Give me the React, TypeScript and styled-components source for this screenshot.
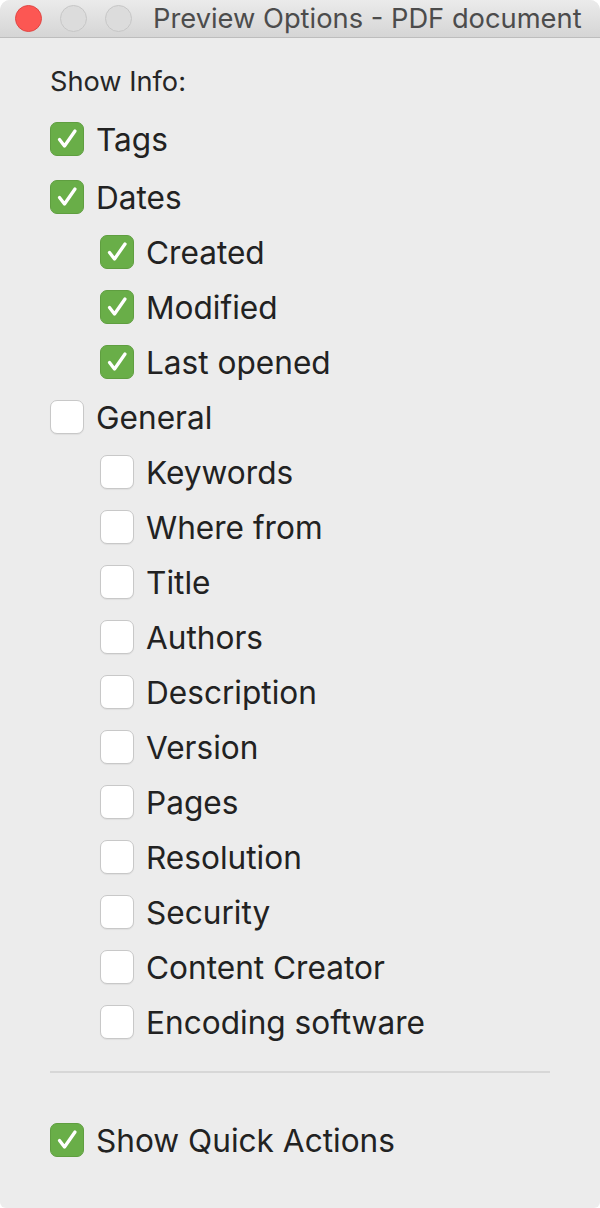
import styled, { createGlobalStyle } from "styled-components";

const Global = createGlobalStyle`
  html, body {
    margin: 0;
    padding: 0;
    background: #ffffff;
  }
  * { box-sizing: border-box; }
`;

type Item = { label: string; checked: boolean; level: number };

const items: Item[] = [
  { label: "Tags", checked: true, level: 0 },
  { label: "Dates", checked: true, level: 0 },
  { label: "Created", checked: true, level: 1 },
  { label: "Modified", checked: true, level: 1 },
  { label: "Last opened", checked: true, level: 1 },
  { label: "General", checked: false, level: 0 },
  { label: "Keywords", checked: false, level: 1 },
  { label: "Where from", checked: false, level: 1 },
  { label: "Title", checked: false, level: 1 },
  { label: "Authors", checked: false, level: 1 },
  { label: "Description", checked: false, level: 1 },
  { label: "Version", checked: false, level: 1 },
  { label: "Pages", checked: false, level: 1 },
  { label: "Resolution", checked: false, level: 1 },
  { label: "Security", checked: false, level: 1 },
  { label: "Content Creator", checked: false, level: 1 },
  { label: "Encoding software", checked: false, level: 1 },
];

const Check = ({ checked }: { checked: boolean }) => (
  <Box $checked={checked}>
    {checked && (
      <svg width="34" height="34" viewBox="0 0 34 34">
        <path
          d="M9.5 17.5 L14.5 24 L25 9"
          fill="none"
          stroke="#ffffff"
          strokeWidth="3.3"
          strokeLinecap="round"
          strokeLinejoin="round"
        />
      </svg>
    )}
  </Box>
);

const App = () => {
  return (
    <>
      <Global />
      <Window>
        <TitleBar>
          <Lights>
            <Light $color="#fc5753" $border="#df4744" />
            <Light $color="#dcdcdc" $border="#c6c6c6" />
            <Light $color="#dcdcdc" $border="#c6c6c6" />
          </Lights>
          <Title>Preview Options - PDF document</Title>
        </TitleBar>
        <Content>
          <Heading>Show Info:</Heading>
          <List>
            {items.map((item, i) => (
              <Row key={item.label} $level={item.level} $extra={i === 0 ? 3 : 0}>
                <Check checked={item.checked} />
                <Label>{item.label}</Label>
              </Row>
            ))}
          </List>
          <Divider />
          <Footer>
            <Row $level={0} $extra={0}>
              <Check checked />
              <Label>Show Quick Actions</Label>
            </Row>
          </Footer>
        </Content>
      </Window>
    </>
  );
};

export default App;

const Window = styled.div`
  width: 600px;
  height: 1208px;
  background: #ececec;
  border-radius: 10px 10px 6px 6px;
  overflow: hidden;
  display: flex;
  flex-direction: column;
  font-family: Inter, "Liberation Sans", Arial, sans-serif;
`;

const TitleBar = styled.div`
  height: 38px;
  flex-shrink: 0;
  display: flex;
  align-items: center;
  padding: 0 15px;
  background: linear-gradient(#ebebeb, #d5d5d5);
  border-bottom: 1px solid #bdbdbd;
`;

const Lights = styled.div`
  display: flex;
  gap: 18px;
`;

const Light = styled.div<{ $color: string; $border: string }>`
  width: 27px;
  height: 27px;
  border-radius: 50%;
  background: ${(p) => p.$color};
  border: 1px solid ${(p) => p.$border};
`;

const Title = styled.div`
  margin-left: 21px;
  font-size: 27.3px;
  color: #4c4c4c;
  white-space: nowrap;
`;

const Content = styled.div`
  padding: 29px 50px 0 50px;
  display: flex;
  flex-direction: column;
`;

const Heading = styled.div`
  font-size: 27.2px;
  color: #262626;
  height: 30px;
  line-height: 30px;
  margin-bottom: 25px;
`;

const List = styled.div`
  display: flex;
  flex-direction: column;
  gap: 21px;
`;

const Row = styled.div<{ $level: number; $extra: number }>`
  display: flex;
  align-items: center;
  height: 34px;
  padding-left: ${(p) => p.$level * 50}px;
  margin-bottom: ${(p) => p.$extra}px;
`;

const Box = styled.div<{ $checked: boolean }>`
  width: 34px;
  height: 34px;
  border-radius: 7px;
  flex-shrink: 0;
  display: flex;
  align-items: center;
  justify-content: center;
  background: ${(p) => (p.$checked ? "#69ae48" : "#ffffff")};
  border: 1px solid ${(p) => (p.$checked ? "#5f9e40" : "#c8c8c8")};
  box-shadow: ${(p) => (p.$checked ? "none" : "0 1px 1px rgba(0,0,0,0.06)")};
  svg {
    margin: -1px;
  }
`;

const Label = styled.span`
  margin-left: 12px;
  font-size: 31.6px;
  color: #222222;
  white-space: nowrap;
`;

const Divider = styled.div`
  margin-top: 32px;
  height: 2px;
  background: #d7d7d7;
`;

const Footer = styled.div`
  padding-top: 50px;
`;
